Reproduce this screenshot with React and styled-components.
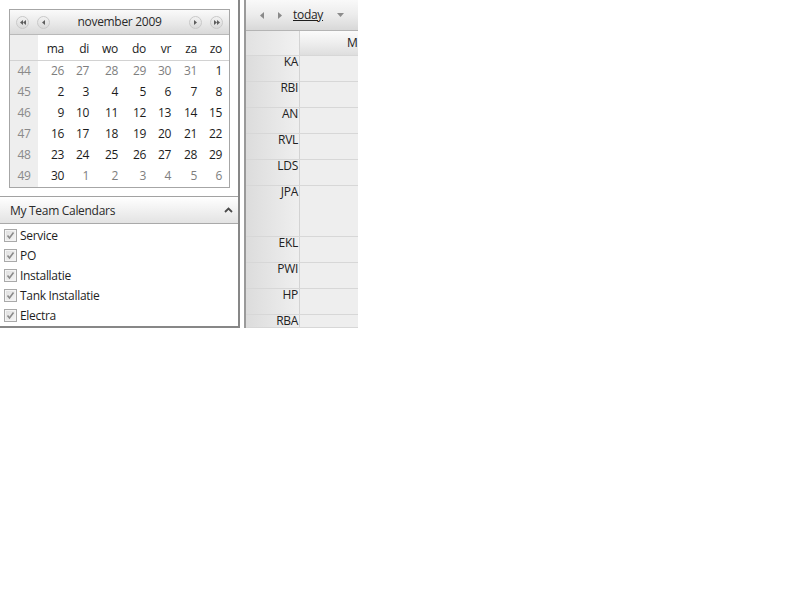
import React from "react";
import styled, { createGlobalStyle } from "styled-components";

const GlobalStyle = createGlobalStyle`
  html, body { margin: 0; padding: 0; background: #fff; }
  body {
    font-family: "Open Sans", "Noto Sans", sans-serif;
    font-size: 12px;
    letter-spacing: -0.3px;
    color: #222;
  }
`;

const Page = styled.div`
  display: flex;
  align-items: flex-start;
  width: 800px;
  height: 600px;
  background: #fff;
`;

/* ---------- left side ---------- */

const SidePanel = styled.div`
  width: 238px;
  height: 326px;
  border-right: 2px solid #878787;
  border-bottom: 2px solid #878787;
  display: flex;
  flex-direction: column;
`;

const MiniCalendar = styled.div`
  margin: 9px 0 0 9px;
  width: 219px;
  border: 1px solid #a6a6a6;
  display: flex;
  flex-direction: column;
`;

const CalHeader = styled.div`
  height: 23px;
  border-bottom: 1px solid #b9b9b9;
  background: linear-gradient(#fafafa, #e9e9e9 55%, #d9d9d9);
  display: flex;
  align-items: center;
  padding: 1px 6px 0;
  gap: 8px;
`;

const CalTitle = styled.div`
  flex: 1;
  text-align: center;
  color: #2a2a2a;
  margin-top: -2px;
`;

const RoundButton = styled.span`
  width: 11px;
  height: 11px;
  border-radius: 50%;
  border: 1px solid #c9c9c9;
  background: linear-gradient(#f2f2f2, #dadada);
  display: flex;
  align-items: center;
  justify-content: center;
  flex: none;
`;

const GridRow = styled.div`
  display: grid;
  grid-template-columns: 28px 26px 25px 29px 28px 25px 26px 25px;
  padding-right: 7px;
  height: 21px;
  padding-top: ${(p) => (p.$names ? "4px" : "0")};
  line-height: 19px;
  border-bottom: ${(p) => (p.$names ? "1px solid #d2d2d2" : "none")};
  background: linear-gradient(to right, #eeeeee 28px, #fff 28px);
`;

const WeekCell = styled.span`
  text-align: center;
  color: #8a8a8a;
`;

const DayCell = styled.span`
  text-align: right;
  color: ${(p) => (p.$muted ? "#7e7e7e" : "#1c1c1c")};
`;

const SectionHeader = styled.div`
  margin-top: 8px;
  height: 26px;
  border-top: 1px solid #a2a2a2;
  border-bottom: 1px solid #a9a9a9;
  background: linear-gradient(#ffffff, #f1f1f1 50%, #e3e3e3);
  display: flex;
  align-items: center;
  justify-content: space-between;
  padding: 0 5px 0 10px;
  color: #2a2a2a;
`;

const TeamList = styled.ul`
  list-style: none;
  margin: 0;
  padding: 1px 0 0 4px;
`;

const TeamItem = styled.li`
  height: 20px;
  display: flex;
  align-items: center;
  gap: 3px;
  color: #1e1e1e;
`;

const CheckBox = styled.span`
  width: 11px;
  height: 11px;
  border: 1px solid #a9a9a9;
  background: linear-gradient(135deg, #dedede, #f6f6f6);
  box-shadow: inset 0 0 0 1px #f4f4f4;
  display: flex;
  align-items: center;
  justify-content: center;
  flex: none;
`;

/* ---------- scheduler ---------- */

const Scheduler = styled.div`
  margin-left: 4px;
  width: 112px;
  height: 328px;
  border-left: 2px solid #9a9a9a;
  background: #eeeeee;
  overflow: hidden;
  display: flex;
  flex-direction: column;
`;

const Toolbar = styled.div`
  height: 30px;
  flex: none;
  border-bottom: 1px solid #b4b4b4;
  background: linear-gradient(#f9f9f9, #ececec 50%, #d8d8d8);
  display: flex;
  align-items: center;
  padding-left: 14px;
`;

const ToolSlot = styled.span`
  display: flex;
  align-items: center;
  margin-left: ${(p) => p.$gap || 0}px;
`;

const TodayLink = styled.span`
  color: #1e1e1e;
  text-decoration: underline;
  margin-top: -1px;
`;

const Row = styled.div`
  display: flex;
  flex: none;
  height: ${(p) => p.$h}px;
  border-bottom: 1px solid #d7d7d7;
`;

const LabelCell = styled.div`
  width: 52px;
  flex: none;
  border-right: 1px solid #d3d3d3;
  background: linear-gradient(to right, #dcdcdc, #efefef);
  text-align: right;
  padding-right: 1px;
  line-height: 12px;
  color: #222;
`;

const HeaderLabelCell = styled(LabelCell)`
  background: linear-gradient(to right, #e2e2e2, #f1f1f1);
`;

const DayHeaderCell = styled.div`
  flex: 1;
  padding-left: 47px;
  line-height: 23px;
  white-space: nowrap;
  background: linear-gradient(#fbfbfb, #eeeeee 50%, #dedede);
  color: #222;
`;

const BodyCell = styled.div`
  flex: 1;
  background: #eeeeee;
`;

/* ---------- icons ---------- */

const Tri = ({ dir = "left", color = "#666", w = 3, h = 5 }) => (
  <svg width={w} height={h} viewBox={`0 0 ${w} ${h}`}>
    {dir === "left" ? (
      <polygon points={`${w},0 0,${h / 2} ${w},${h}`} fill={color} />
    ) : (
      <polygon points={`0,0 ${w},${h / 2} 0,${h}`} fill={color} />
    )}
  </svg>
);

const DoubleTri = ({ dir }) => (
  <svg width="6" height="5" viewBox="0 0 6 5">
    {dir === "left" ? (
      <>
        <polygon points="3,0 0,2.5 3,5" fill="#5e5e5e" />
        <polygon points="6,0 3,2.5 6,5" fill="#5e5e5e" />
      </>
    ) : (
      <>
        <polygon points="0,0 3,2.5 0,5" fill="#5e5e5e" />
        <polygon points="3,0 6,2.5 3,5" fill="#5e5e5e" />
      </>
    )}
  </svg>
);

const Chevron = () => (
  <svg width="9" height="6" viewBox="0 0 9 6">
    <polyline points="1,5 4.5,1.5 8,5" fill="none" stroke="#4a4a4a" strokeWidth="1.8" />
  </svg>
);

const Tick = () => (
  <svg width="9" height="9" viewBox="0 0 9 9">
    <polyline points="1.5,4.5 3.5,7 7.5,1.5" fill="none" stroke="#8a8a8a" strokeWidth="1.6" />
  </svg>
);

const DropArrow = () => (
  <svg width="7" height="4" viewBox="0 0 7 4">
    <polygon points="0,0 7,0 3.5,4" fill="#8c8c8c" />
  </svg>
);

/* ---------- data ---------- */

const dayNames = ["ma", "di", "wo", "do", "vr", "za", "zo"];

const weeks = [
  { nr: 44, days: [[26, 1], [27, 1], [28, 1], [29, 1], [30, 1], [31, 1], [1, 0]] },
  { nr: 45, days: [[2], [3], [4], [5], [6], [7], [8]] },
  { nr: 46, days: [[9], [10], [11], [12], [13], [14], [15]] },
  { nr: 47, days: [[16], [17], [18], [19], [20], [21], [22]] },
  { nr: 48, days: [[23], [24], [25], [26], [27], [28], [29]] },
  { nr: 49, days: [[30], [1, 1], [2, 1], [3, 1], [4, 1], [5, 1], [6, 1]] },
];

const teams = ["Service", "PO", "Installatie", "Tank Installatie", "Electra"];

const resources = [
  ["KA", 25], ["RBI", 25], ["AN", 25], ["RVL", 25], ["LDS", 25],
  ["JPA", 50], ["EKL", 25], ["PWI", 25], ["HP", 25], ["RBA", 12],
];

export default function App() {
  return (
    <>
      <GlobalStyle />
      <Page>
        <SidePanel>
          <MiniCalendar>
            <CalHeader>
              <RoundButton><DoubleTri dir="left" /></RoundButton>
              <RoundButton><Tri dir="left" color="#5e5e5e" /></RoundButton>
              <CalTitle>november 2009</CalTitle>
              <RoundButton><Tri dir="right" color="#5e5e5e" /></RoundButton>
              <RoundButton><DoubleTri dir="right" /></RoundButton>
            </CalHeader>
            <GridRow $names>
              <WeekCell />
              {dayNames.map((d) => (
                <DayCell key={d}>{d}</DayCell>
              ))}
            </GridRow>
            {weeks.map((w) => (
              <GridRow key={w.nr}>
                <WeekCell>{w.nr}</WeekCell>
                {w.days.map(([n, m], i) => (
                  <DayCell key={i} $muted={!!m}>{n}</DayCell>
                ))}
              </GridRow>
            ))}
          </MiniCalendar>

          <SectionHeader>
            <span>My Team Calendars</span>
            <Chevron />
          </SectionHeader>
          <TeamList>
            {teams.map((t) => (
              <TeamItem key={t}>
                <CheckBox><Tick /></CheckBox>
                {t}
              </TeamItem>
            ))}
          </TeamList>
        </SidePanel>

        <Scheduler>
          <Toolbar>
            <ToolSlot><Tri dir="left" color="#8a8a8a" w={4} h={7} /></ToolSlot>
            <ToolSlot $gap={14}><Tri dir="right" color="#8a8a8a" w={4} h={7} /></ToolSlot>
            <ToolSlot $gap={11}><TodayLink>today</TodayLink></ToolSlot>
            <ToolSlot $gap={14}><DropArrow /></ToolSlot>
          </Toolbar>
          <Row $h={24}>
            <HeaderLabelCell />
            <DayHeaderCell>M</DayHeaderCell>
          </Row>
          {resources.map(([name, h]) => (
            <Row key={name} $h={h}>
              <LabelCell>{name}</LabelCell>
              <BodyCell />
            </Row>
          ))}
        </Scheduler>
      </Page>
    </>
  );
}
